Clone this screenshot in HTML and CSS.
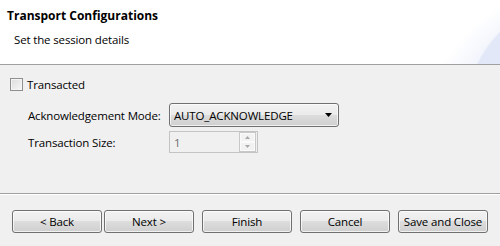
FILE: index.html
```html
<!DOCTYPE html>
<html>
<head>
  <meta charset="utf-8">
  <title>Transport Configurations</title>
  <link rel="stylesheet" href="styles.css">
</head>

<body>
  <div class="header">
    <h1>Transport Configurations</h1>
    <p>Set the session details</p>
  </div>

  <div class="content">
    <label class="check-row">
      <span class="checkbox"></span>
      Transacted
    </label>

    <div class="fields">
      <label>Acknowledgement Mode:</label>
      <div class="select">
        <span>AUTO_ACKNOWLEDGE</span>
        <svg width="7" height="4" viewBox="0 0 7 4"><path d="M0 0h7L3.5 4z" fill="#000"/></svg>
      </div>

      <label>Transaction Size:</label>
      <div class="spinner">
        <span>1</span>
        <div class="spin-buttons">
          <div class="spin-btn"><svg width="5" height="3" viewBox="0 0 5 3"><path d="M0 3h5L2.5 0z" fill="#a8a8a8"/></svg></div>
          <div class="spin-btn"><svg width="5" height="3" viewBox="0 0 5 3"><path d="M0 0h5L2.5 3z" fill="#a8a8a8"/></svg></div>
        </div>
      </div>
    </div>
  </div>

  <div class="footer">
    <div class="nav-group">
      <button>&lt; Back</button>
      <button>Next &gt;</button>
    </div>
    <button>Finish</button>
    <button>Cancel</button>
    <button>Save and Close</button>
  </div>
</body>

</html>
```

FILE: styles.css
```css
body {
  margin: 0;
  background: #f0f0f0;
  font-family: 'Open Sans', 'Noto Sans', sans-serif;
  font-size: 11.5px;
  letter-spacing: -0.15px;
  color: #000;
  height: 246px;
  overflow: hidden;
  white-space: nowrap;
}

.header {
  height: 65px;
  box-sizing: border-box;
  padding: 7px 0 0 7px;
  border-bottom: 1px solid #a0a0a0;
  background:
    radial-gradient(circle at 590px 120px, #dde5f6 0, #e2e8f7 125px, rgba(255,255,255,0) 127px),
    radial-gradient(circle at 600px 160px, #e8edf9 0, #f3f6fc 160px, rgba(255,255,255,0) 185px),
    #fff;
}

.header h1 {
  margin: 0;
  font-size: 12px;
  font-weight: bold;
  letter-spacing: 0;
  line-height: 17px;
}

.header p {
  margin: 7px 0 0 7px;
  line-height: 17px;
}

.content {
  height: 129px;
  box-sizing: border-box;
  padding: 13px 0 0 10px;
  border-bottom: 1px solid #a0a0a0;
}

.check-row {
  display: flex;
  align-items: center;
  gap: 4px;
  line-height: 13px;
}

.checkbox {
  width: 11px;
  height: 11px;
  border: 1px solid #8e8f8f;
  background: linear-gradient(135deg, #dcdcdc, #f7f7f7);
  box-shadow: inset 0 0 0 1px #f4f4f4;
}

.fields {
  display: grid;
  grid-template-columns: 141px auto;
  align-items: center;
  row-gap: 4px;
  margin: 12px 0 0 18px;
}

.select {
  width: 170px;
  height: 24px;
  box-sizing: border-box;
  border: 1px solid #707070;
  border-radius: 3px;
  background: linear-gradient(#f2f2f2 0, #ebebeb 50%, #dddddd 50%, #cfcfcf 100%);
  box-shadow: inset 0 0 0 1px rgba(255,255,255,0.7);
  display: flex;
  align-items: center;
  justify-content: space-between;
  padding: 0 6px 0 4px;
}

.spinner {
  width: 89px;
  height: 22px;
  box-sizing: border-box;
  border: 1px solid #c4c4c4;
  background: #f0f0f0;
  display: flex;
  align-items: center;
  justify-content: space-between;
  padding: 0 1px 0 4px;
  color: #6d6d6d;
}

.spin-buttons {
  display: flex;
  flex-direction: column;
  width: 15px;
  height: 18px;
  border: 1px solid #c8c8c8;
}

.spin-btn {
  flex: 1;
  display: flex;
  align-items: center;
  justify-content: center;
  background: #f2f2f2;
  border: 1px solid #fafafa;
}

.footer {
  display: flex;
  gap: 8px;
  padding: 15px 0 0 12px;
  border-top: 1px solid #fff;
}

.nav-group {
  display: flex;
  gap: 2px;
}

button {
  width: 90px;
  height: 23px;
  font-family: inherit;
  font-size: 11.5px;
  letter-spacing: -0.15px;
  color: #000;
  padding: 0;
  border: 1px solid #707070;
  border-radius: 3px;
  background: linear-gradient(#f2f2f2 0, #ebebeb 50%, #dddddd 50%, #cfcfcf 100%);
  box-shadow: inset 0 0 0 1px rgba(255,255,255,0.7);
}
```
